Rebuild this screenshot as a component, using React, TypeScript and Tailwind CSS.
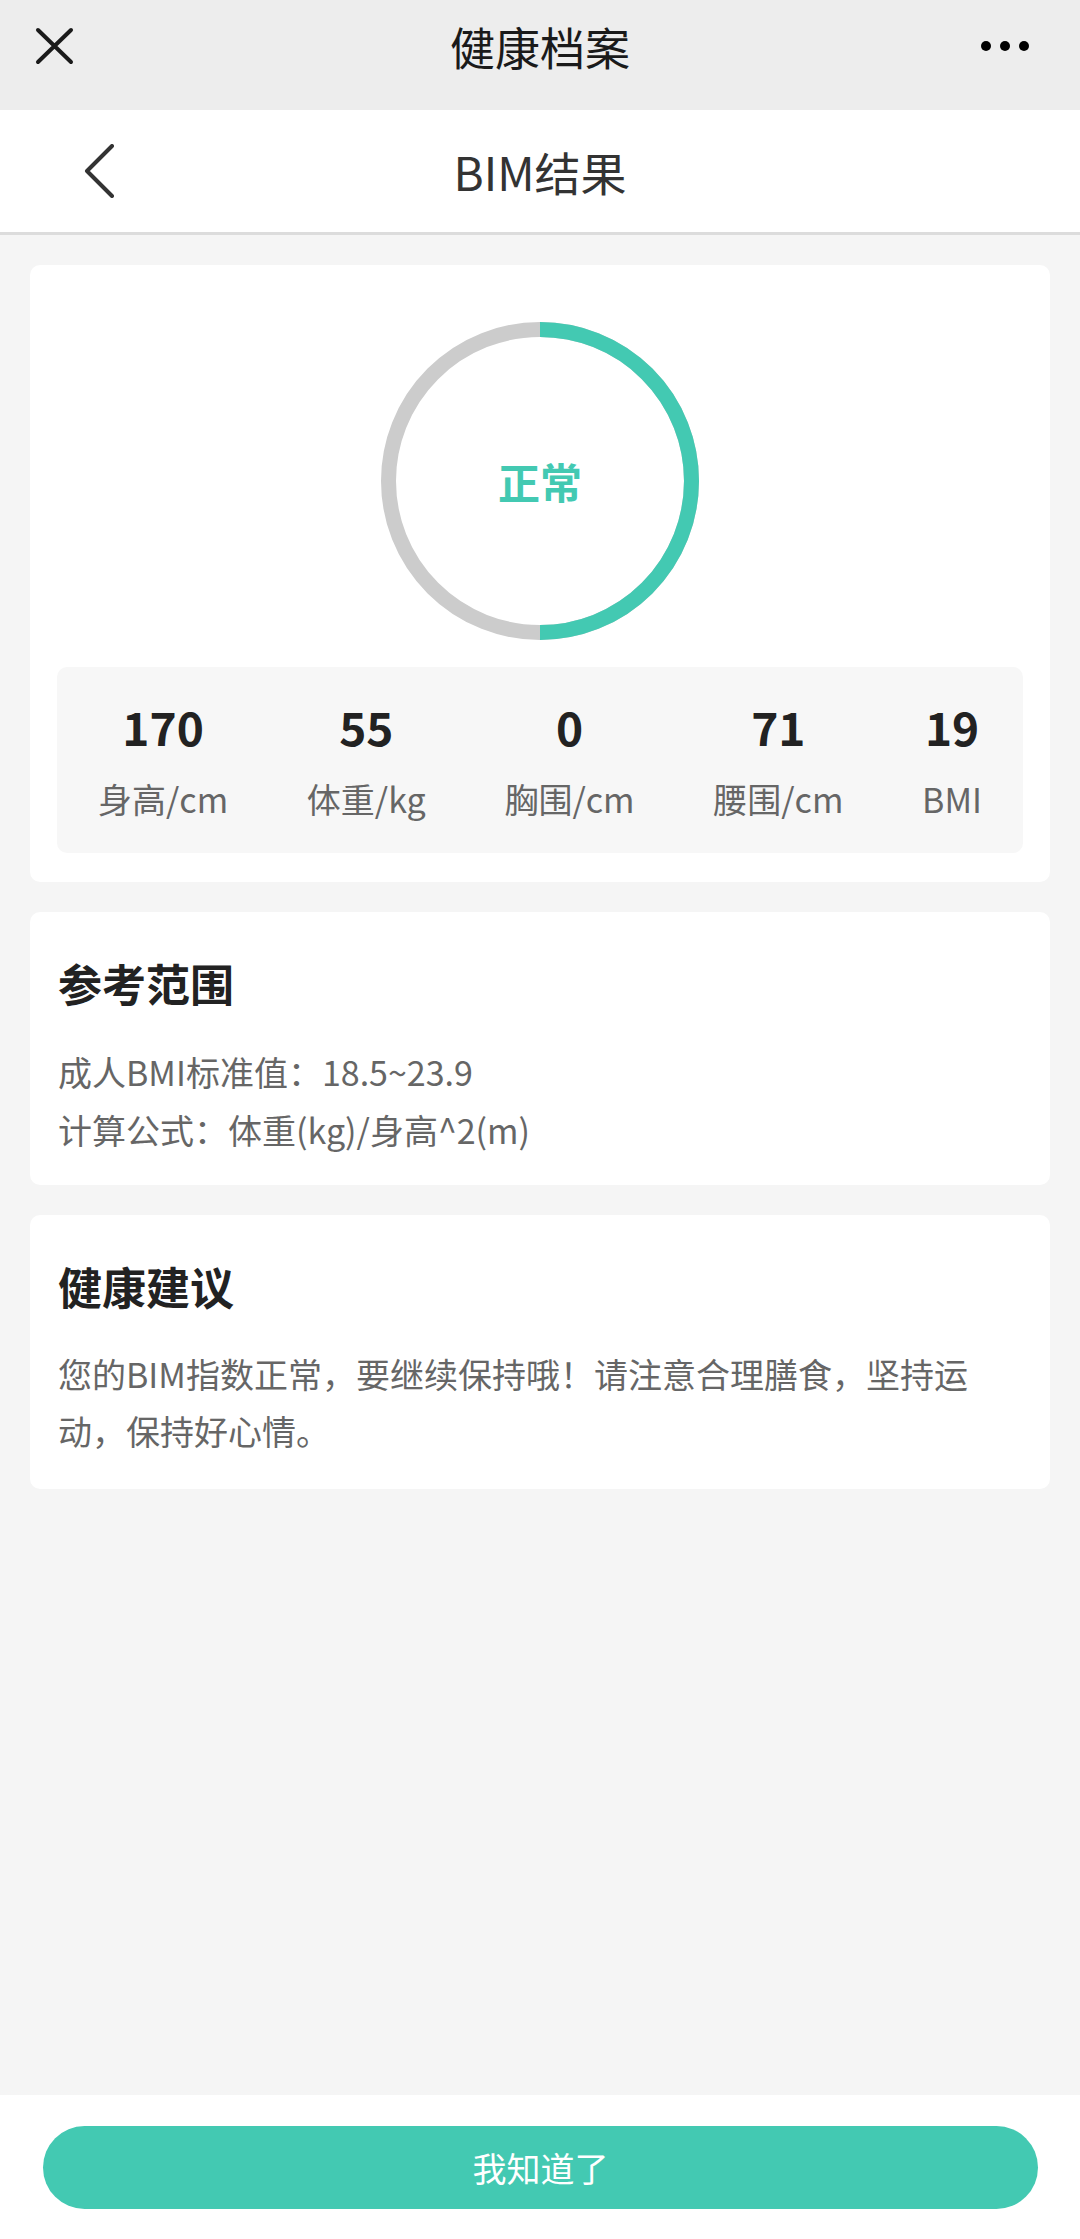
import { useState } from "react";

const stats = [
  { value: "170", label: "身高/cm" },
  { value: "55", label: "体重/kg" },
  { value: "0", label: "胸围/cm" },
  { value: "71", label: "腰围/cm" },
  { value: "19", label: "BMI" },
];

const BmiResult = () => {
  const [ack, setAck] = useState(false);

  return (
    <div
      className="min-h-screen w-full flex flex-col bg-[#f5f5f5] text-[#333]"
      style={{ fontFamily: '"Noto Sans CJK SC", "Noto Sans", sans-serif' }}
    >
      {/* Top bar - mini program header */}
      <div className="h-[110px] bg-[#ededed] pb-[18px] flex items-center justify-between">
        <div className="w-[120px] pl-[35px] flex items-center">
          <svg width="39" height="38" viewBox="0 0 39 38" fill="none">
            <path d="M3 3L36 35M36 3L3 35" stroke="#1a1a1a" strokeWidth="4" strokeLinecap="round" />
          </svg>
        </div>
        <h1 className="text-[45px] leading-none text-[#1a1a1a]">健康档案</h1>
        <div className="w-[120px] pr-[51px] flex items-center justify-end gap-[9px]">
          <span className="w-[10px] h-[10px] rounded-full bg-black" />
          <span className="w-[10px] h-[10px] rounded-full bg-black" />
          <span className="w-[10px] h-[10px] rounded-full bg-black" />
        </div>
      </div>

      {/* Page nav */}
      <div className="h-[125px] bg-white border-b-[3px] border-[#dcdcdc] flex items-center justify-between">
        <div className="w-[140px] pl-[84px] flex items-center">
          <svg width="32" height="54" viewBox="0 0 32 54" fill="none">
            <path d="M28 2L3 27L28 52" stroke="#333" strokeWidth="4" strokeLinecap="round" strokeLinejoin="round" />
          </svg>
        </div>
        <h2 className="text-[46px] leading-none text-[#333]">BIM结果</h2>
        <div className="w-[140px]" />
      </div>

      {/* Content */}
      <div className="flex-1 px-[30px] pt-[30px] flex flex-col gap-[30px]">
        {/* Result card */}
        <div className="bg-white rounded-[10px] px-[27px] pt-[57px] pb-[29px] flex flex-col items-center">
          <div className="relative w-[318px] h-[318px] flex items-center justify-center">
            <svg className="absolute inset-0" width="318" height="318" viewBox="0 0 318 318" fill="none">
              <circle cx="159" cy="159" r="151.5" stroke="#cccccc" strokeWidth="15" />
              <path d="M159 7.5A151.5 151.5 0 0 1 159 310.5" stroke="#43c9b2" strokeWidth="15" />
            </svg>
            <span className="relative text-[42px] font-bold leading-none text-[#43c9b2]">正常</span>
          </div>

          <div className="mt-[27px] w-full bg-[#f7f7f7] rounded-[10px] px-[41px] pt-[36px] pb-[34px] flex justify-between">
            {stats.map((s) => (
              <div key={s.label} className="flex flex-col items-center">
                <span className="text-[46px] leading-[46px] font-bold text-[#222]">{s.value}</span>
                <span className="mt-[30px] text-[34px] leading-[40px] text-[#666]">{s.label}</span>
              </div>
            ))}
          </div>
        </div>

        {/* Reference range */}
        <div className="bg-white rounded-[10px] px-[28px] pt-[46px] pb-[26px]">
          <h3 className="text-[44px] leading-[50px] font-bold text-[#222]">参考范围</h3>
          <div className="mt-[35px] text-[34px] leading-[58px] text-[#666]">
            <p>成人BMI标准值：18.5~23.9</p>
            <p>计算公式：体重(kg)/身高^2(m)</p>
          </div>
        </div>

        {/* Health advice */}
        <div className="bg-white rounded-[10px] px-[28px] pt-[46px] pb-[30px]">
          <h3 className="text-[44px] leading-[50px] font-bold text-[#222]">健康建议</h3>
          <p className="mt-[34px] text-[34px] leading-[57px] text-[#666] w-[935px]">
            您的BIM指数正常，要继续保持哦！请注意合理膳食，坚持运动，保持好心情。
          </p>
        </div>
      </div>

      {/* Bottom action */}
      <div className="bg-white pt-[31px] pb-[30px] pl-[43px] pr-[42px]">
        <button
          onClick={() => setAck(!ack)}
          className="w-full h-[83px] rounded-full bg-[#43c9b2] text-white text-[34px] leading-none"
        >
          我知道了
        </button>
      </div>
    </div>
  );
};

export default function App() {
  return <BmiResult />;
}
